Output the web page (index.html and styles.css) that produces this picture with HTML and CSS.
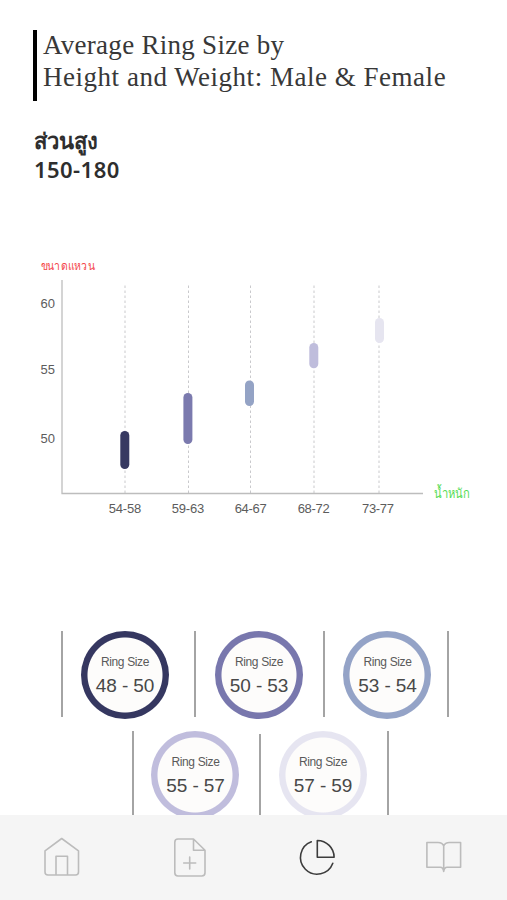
FILE: index.html
```html
<!DOCTYPE html>
<html lang="th">
<head>
<meta charset="utf-8">
<title>Average Ring Size</title>
<link rel="stylesheet" href="styles.css">
</head>
<body>
<main class="content">
  <h1 class="title"><span class="line line-a">Average Ring Size by</span><span class="line line-b">Height and Weight: Male &amp; Female</span></h1>
  <section class="height-info">
    <div class="height-label">ส่วนสูง</div>
    <div class="height-range">150-180</div>
  </section>
  <svg class="chart" width="507" height="270" viewBox="0 255 507 270">
    <g class="guides">
      <path d="M125 285.5V493M188.5 285.5V493M250.5 285.5V493M314 285.5V493M379 285.5V493"/>
    </g>
    <path class="axis" d="M62 280V493.5H423"/>
    <rect x="120.3" y="431" width="9" height="38" rx="4.5" fill="#373961"/>
    <rect x="183.4" y="393" width="9" height="51" rx="4.5" fill="#7b7aae"/>
    <rect x="245" y="380.5" width="9" height="25.5" rx="4.5" fill="#94a3c5"/>
    <rect x="309.3" y="343" width="9" height="25.2" rx="4.5" fill="#bfbddc"/>
    <rect x="375" y="318" width="9" height="25" rx="4.5" fill="#e6e5f0"/>
    <text class="y-title" x="40.5" y="270" textLength="54" lengthAdjust="spacingAndGlyphs">ขนาดแหวน</text>
    <text class="x-title" x="434" y="498" textLength="36" lengthAdjust="spacingAndGlyphs">น้ำหนัก</text>
    <g class="ticks">
      <text x="40.5" y="308" textLength="14.5">60</text>
      <text x="40.5" y="373.5" textLength="14.5">55</text>
      <text x="40.5" y="442.7" textLength="14.5">50</text>
      <text x="108.7" y="513" textLength="32.5">54-58</text>
      <text x="171.7" y="513" textLength="32.5">59-63</text>
      <text x="234.7" y="513" textLength="32">64-67</text>
      <text x="297.7" y="513" textLength="32">68-72</text>
      <text x="362" y="513" textLength="32">73-77</text>
    </g>
  </svg>
  <section class="rings">
    <div class="row row-top">
      <i class="divider"></i>
      <div class="ring navy"><span>Ring Size</span><b>48 - 50</b></div>
      <i class="divider"></i>
      <div class="ring violet"><span>Ring Size</span><b>50 - 53</b></div>
      <i class="divider"></i>
      <div class="ring blue"><span>Ring Size</span><b>53 - 54</b></div>
      <i class="divider"></i>
    </div>
    <div class="row row-bottom">
      <i class="divider"></i>
      <div class="ring lilac"><span>Ring Size</span><b>55 - 57</b></div>
      <i class="divider short"></i>
      <div class="ring pale"><span>Ring Size</span><b>57 - 59</b></div>
      <i class="divider"></i>
    </div>
  </section>
</main>
<nav class="tabs">
  <svg class="icon" viewBox="42 837 40 40"><path d="M61.7 838.5L78.5 850.8V872Q78.5 875 75.5 875H48Q45 875 45 872V850.8ZM56 875V856.3H67.5V875"/></svg>
  <svg class="icon" viewBox="170 837 40 40"><path d="M194.5 839H179Q175.8 839 175.8 842.2V872.8Q175.8 876 179 876H202.8Q206 876 206 872.8V850.3ZM194.5 839V850.3H206M190.7 857V869M184.7 863H196.7"/></svg>
  <svg class="icon active" viewBox="297 837 40 40"><path d="M311.3 841.8A16.7 16.7 0 1 0 332.8 863.3M317.3 840.5V857.3H334.1A16.8 16.8 0 0 0 317.3 840.5Z"/></svg>
  <svg class="icon" viewBox="424 837 40 40"><path d="M426.9 842.5H438Q442.5 842.5 443.7 846Q445 842.5 449.5 842.5H460.6V867.3H447Q444.3 867.3 443.7 871.5Q443.1 867.3 440.4 867.3H426.9ZM443.7 846V871"/></svg>
</nav>
</body>
</html>
```
FILE: styles.css
```css
* { box-sizing: border-box; }
body {
  margin: 0;
  height: 900px;
  overflow: hidden;
  background: #fff;
  color: #333;
  font-family: "Liberation Sans", sans-serif;
}
.content { height: 815px; padding-top: 30px; overflow: hidden; }
.title {
  display: flow-root;
  margin: 0 0 0 33px;
  height: 71px;
  border-left: 4px solid #000;
  padding-left: 6px;
  font: 400 27px/32px "Liberation Serif", serif;
  color: #383838;
}
.line { display: block; white-space: nowrap; }
.line-a { margin-top: -1px; letter-spacing: 0.28px; }
.line-b { letter-spacing: 0.52px; }
.height-info {
  height: 154px;
  padding: 25px 0 0 34px;
  font: 600 22px/29px "Noto Sans", sans-serif;
  color: #2e2e2e;
}
.height-range { letter-spacing: 0.45px; line-height: 28px; }
.chart { display: block; }
.guides path { fill: none; stroke: #c9c9cc; stroke-width: 1; stroke-dasharray: 2.5 2.5; }
.axis { fill: none; stroke: #bdbdbd; stroke-width: 1.3; }
.y-title, .x-title { font: 12px "Noto Sans", sans-serif; }
.y-title { fill: #f4474b; }
.x-title { fill: #55dc55; font-size: 13px; }
.ticks { font-size: 13px; fill: #5c5c5c; }
.rings { padding-top: 106px; }
.row { display: flex; align-items: flex-start; height: 100px; }
.row-top { padding-left: 60.5px; }
.row-bottom { padding-left: 132px; }
.divider { flex: none; width: 2px; height: 86px; background: #a4a4a4; }
.short { margin-top: 3px; }
.ring {
  flex: none;
  display: flex;
  flex-direction: column;
  align-items: center;
  width: 88px;
  height: 88px;
  padding: 6px 0 0 1px;
  border-radius: 50%;
  background: radial-gradient(circle closest-side, #fdfcfb 37px, var(--tone) 38px);
  white-space: nowrap;
}
.ring span { margin-top: 17px; font-size: 12px; line-height: 16px; letter-spacing: -0.35px; color: #5a5a5a; }
.ring b { margin-top: 4px; font-weight: 400; font-size: 19px; line-height: 24px; letter-spacing: -0.1px; color: #484848; }
.navy { --tone: #353760; margin: 0 25px 0 18px; }
.violet { --tone: #7877ad; margin: 0 20px 0 19px; }
.blue { --tone: #94a3c7; margin: 0 15.5px 0 18.5px; }
.lilac { --tone: #c0bddd; margin: 0 20px 0 17px; }
.pale { --tone: #e6e5f1; margin: 0 20px 0 17.5px; }
.tabs {
  display: flex;
  align-items: flex-start;
  justify-content: space-between;
  height: 85px;
  padding: 22px 43px 0 42px;
  background: #f5f5f5;
}
.icon {
  flex: none;
  width: 40px;
  height: 40px;
  fill: none;
  stroke: #bcbcbc;
  stroke-width: 1.6;
  stroke-linejoin: round;
  stroke-linecap: round;
}
.active { stroke: #3c3c3c; }
```
